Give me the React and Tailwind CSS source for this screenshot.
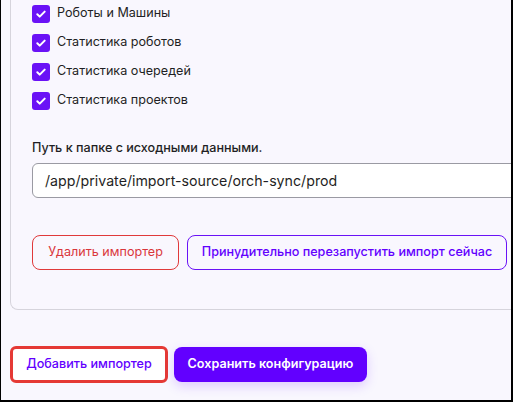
import React from "react";

const purple = "#6200ff";

function CheckRow({ label }) {
  return (
    <div className="flex h-[29px] items-center gap-[7px]">
      <span className="flex h-[18px] w-[18px] items-center justify-center rounded-[3px] bg-[#6a12f6]">
        <svg width="12" height="12" viewBox="0 0 12 12" fill="none">
          <path
            d="M2.3 6.2l2.4 2.4 5-5"
            stroke="white"
            strokeWidth="2"
            strokeLinecap="round"
            strokeLinejoin="round"
          />
        </svg>
      </span>
      <span className="text-[12.6px] text-[#1f1f24]">{label}</span>
    </div>
  );
}

export default function App() {
  const stats = [
    "Роботы и Машины",
    "Статистика роботов",
    "Статистика очередей",
    "Статистика проектов",
  ];

  return (
    <div className="h-[402px] w-[513px] overflow-hidden border-b-2 border-l border-r-2 border-black bg-[#f9f7fe] font-['Inter',sans-serif]">
      <div className="pl-[9px]">
        {/* importer card, top cut off */}
        <div className="w-[560px] rounded-bl-lg border-b border-l border-[#d6d4dc] pb-[39px] pl-[21px]">
          <div className="-mt-[1px] flex flex-col">
            {stats.map((s) => (
              <CheckRow key={s} label={s} />
            ))}
          </div>

          <div className="mt-[23px] text-[12.6px] font-medium leading-5 text-[#1f1f24]">
            Путь к папке с исходными данными.
          </div>
          <div className="mt-[5px] flex h-[35px] w-[500px] items-center rounded-md border border-[#9a9aa3] bg-white px-[12px] text-[14.2px] text-[#1f1f24]">
            /app/private/import-source/orch-sync/prod
          </div>

          <div className="mt-[37px] flex gap-[8px]">
            <button className="h-[35px] w-[147px] rounded-lg border border-[#e0393b] text-[12.6px] text-[#d9363b]">
              Удалить импортер
            </button>
            <button className="h-[35px] w-[320px] rounded-lg border border-[#6a12f6] text-[12.6px] font-medium text-[#6200ff]">
              Принудительно перезапустить импорт сейчас
            </button>
          </div>
        </div>

        <div className="mt-[36px] flex items-center gap-[6px]">
          <button className="h-[37px] w-[158px] rounded-md border-[3px] border-[#e53935] bg-white text-[12.6px] font-medium text-[#6200ff]">
            Добавить импортер
          </button>
          <button
            className="h-[35px] w-[193px] rounded-lg text-[12.6px] font-semibold text-white shadow-[0_4px_12px_rgba(98,0,255,0.18)]"
            style={{ backgroundColor: purple }}
          >
            Сохранить конфигурацию
          </button>
        </div>
      </div>
    </div>
  );
}
